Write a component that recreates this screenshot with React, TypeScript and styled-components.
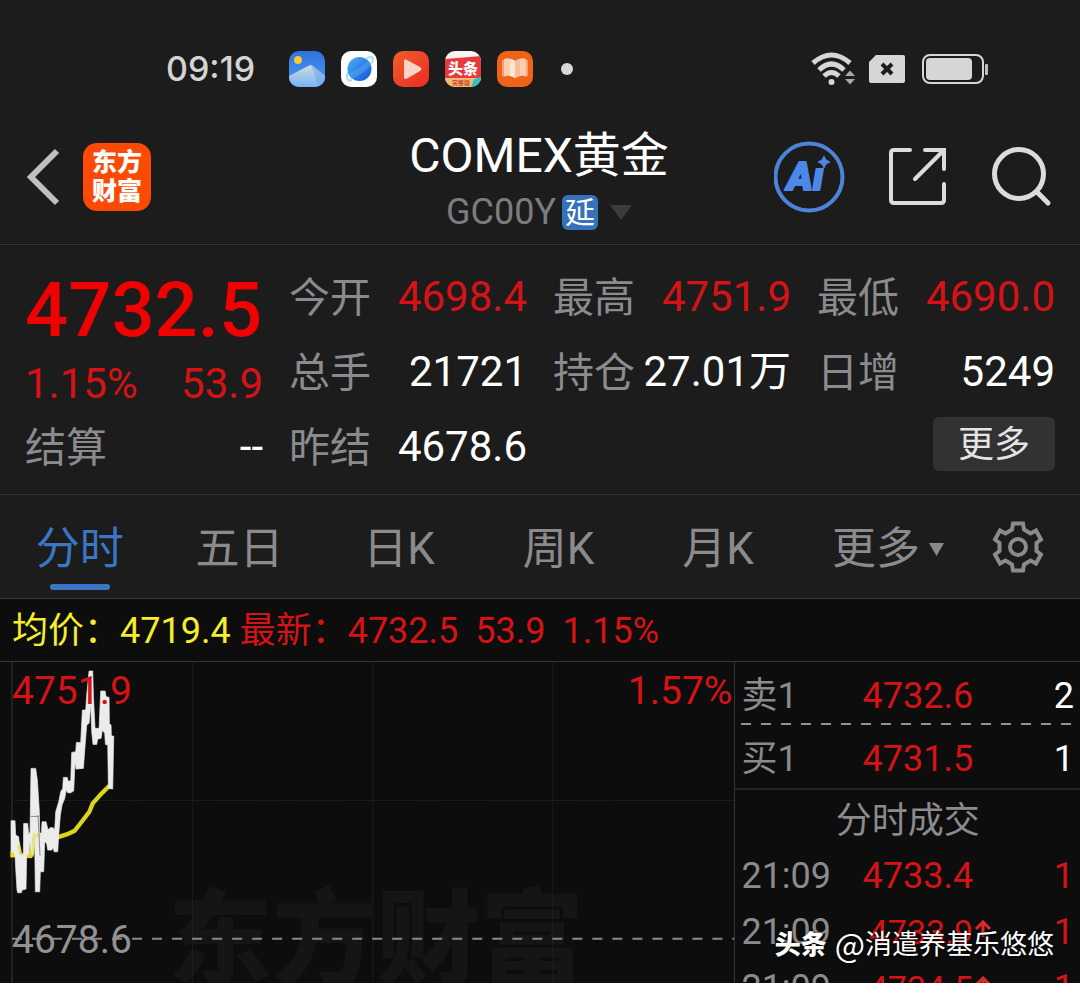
import React from "react";
import styled, { createGlobalStyle } from "styled-components";

const sans = `Roboto, "Noto Sans CJK SC", sans-serif`;

const color = {
  panel: "#1c1c1c",
  chart: "#0d0d0d",
  line: "#343434",
  muted: "#8b8b8e",
  dim: "#7c7c80",
  red: "#d51317",
  strongRed: "#ee0202",
  yellow: "#f6ee2c",
  blue: "#3a76c4",
  white: "#ffffff",
};

const GlobalStyle = createGlobalStyle`
  * { box-sizing: border-box; }
  body { margin: 0; background: ${color.chart}; font-family: ${sans}; }
  button { font-family: inherit; border: 0; padding: 0; background: none; cursor: pointer; }
  svg { display: block; flex: none; }
`;

const Page = styled.div`
  position: relative;
  display: flex;
  flex-direction: column;
  height: 100vh;
  overflow: hidden;
  background: ${color.panel};
  color: ${color.white};
`;

/* ---------- status bar ---------- */

const StatusBar = styled.div`
  display: flex;
  align-items: center;
  padding: 51px 91px 24px 166px;
`;

const Clock = styled.time`
  width: 123px;
  font-family: Inter, sans-serif;
  font-size: 34px;
  font-weight: 500;
  line-height: 36px;
  color: #d4d4d4;
`;

const Notifications = styled.div`
  display: flex;
  align-items: center;
  gap: 16px;
`;

const MoreDot = styled.span`
  width: 12px;
  height: 12px;
  margin-left: 12px;
  border-radius: 50%;
  background: #d8d8d8;
`;

const Signals = styled.div`
  display: flex;
  align-items: center;
  gap: 14px;
  margin-left: auto;
`;

/* ---------- header ---------- */

const Header = styled.header`
  display: grid;
  grid-template-columns: 1fr auto 1fr;
  align-items: center;
  padding: 10px 28px 11px 26px;
  border-bottom: 1px solid ${color.line};
`;

const HeaderStart = styled.div`
  display: flex;
  align-items: center;
  gap: 21px;
`;

const HeaderEnd = styled.div`
  display: flex;
  align-items: center;
  justify-content: flex-end;
  gap: 43px;
`;

const Brand = styled.a`
  display: grid;
  place-content: center;
  width: 68px;
  height: 68px;
  border-radius: 14px;
  background: #fb4a05;
  color: ${color.white};
  font-size: 25px;
  font-weight: 900;
  line-height: 29px;
  text-align: center;
  text-decoration: none;
`;

const Title = styled.h1`
  margin: 0;
  font-size: 48px;
  font-weight: 400;
  line-height: 70px;
  text-align: center;
`;

const Symbol = styled.button`
  display: flex;
  align-items: center;
  justify-content: center;
  width: 100%;
  color: ${color.dim};
  font-size: 36px;
  line-height: 42px;
`;

const DelayBadge = styled.span`
  width: 36px;
  height: 35px;
  margin: 0 12px 0 6px;
  border-radius: 6px;
  background: #3672b8;
  color: ${color.white};
  font-size: 30px;
  line-height: 35px;
  text-align: center;
`;

/* ---------- quote ---------- */

const Quote = styled.section`
  display: grid;
  grid-template-columns: repeat(4, minmax(0, 1fr));
  grid-auto-rows: 75px;
  column-gap: 26px;
  padding: 14px 25px 10px;
  border-bottom: 1px solid ${color.line};
`;

const Headline = styled.div`
  grid-row: span 2;
`;

const LastPrice = styled.div`
  color: ${color.strongRed};
  font-size: 76px;
  font-weight: 500;
  line-height: 102px;
`;

const Change = styled.div`
  display: flex;
  justify-content: space-between;
  color: ${color.red};
  font-size: 42px;
  line-height: 46px;
`;

const Field = styled.div`
  display: flex;
  justify-content: space-between;
  line-height: 75px;
  white-space: nowrap;
`;

const FieldLabel = styled.span`
  color: ${color.muted};
  font-size: 41px;
  line-height: 79px;
`;

const FieldValue = styled.span<{ $up?: boolean }>`
  color: ${(p) => (p.$up ? color.red : color.white)};
  font-size: 42px;
`;

const MoreButton = styled.button`
  grid-column: 4;
  justify-self: end;
  width: 122px;
  height: 54px;
  margin-top: 8px;
  padding-top: 3px;
  border-radius: 6px;
  background: #323232;
  color: #e4e4e4;
  font-size: 36px;
  line-height: 51px;
`;

/* ---------- tabs ---------- */

const Tabs = styled.nav`
  display: flex;
  padding-right: 22px;
  border-bottom: 1px solid ${color.line};
`;

const Tab = styled.button<{ $active?: boolean; $wide?: boolean }>`
  position: relative;
  display: flex;
  flex: ${(p) => (p.$wide ? "0 0 180px" : "1 1 0")};
  align-items: center;
  justify-content: center;
  gap: 9px;
  padding-top: 5px;
  color: ${(p) => (p.$active ? color.blue : color.muted)};
  font-size: 44px;
  line-height: 98px;

  &::after {
    content: "";
    display: ${(p) => (p.$active ? "block" : "none")};
    position: absolute;
    bottom: 8px;
    left: calc(50% - 30px);
    width: 60px;
    height: 6px;
    border-radius: 3px;
    background: ${color.blue};
  }
`;

const SettingsButton = styled.button`
  display: grid;
  flex: 0 0 80px;
  place-items: center;
`;

/* ---------- chart ---------- */

const Summary = styled.div`
  display: flex;
  padding: 3px 12px 0;
  border-bottom: 1px solid ${color.line};
  background: ${color.chart};
  font-size: 36px;
  line-height: 59px;
  white-space: nowrap;
`;

const SummaryItem = styled.span<{ $tone: "yellow" | "red"; $gap: number }>`
  margin-right: ${(p) => p.$gap}px;
  color: ${(p) => color[p.$tone]};
`;

const Market = styled.main`
  display: flex;
  flex: 1;
  min-height: 0;
  overflow: hidden;
  background: ${color.chart};
`;

const ChartPane = styled.section`
  flex: 1;
  min-width: 0;

  svg {
    width: 100%;
    height: auto;
  }
`;

const Side = styled.aside`
  flex: 0 0 32%;
  border-left: 1px solid ${color.line};
`;

const Table = styled.table`
  width: 100%;
  border-collapse: collapse;
  table-layout: fixed;
  font-size: 36px;
  line-height: 40px;
`;

const BookRow = styled.tr<{ $dashed?: boolean }>`
  height: 63px;
  background: ${(p) =>
    p.$dashed
      ? "repeating-linear-gradient(90deg, #929292 0 10px, transparent 10px 20px) 6px 100% / 330px 2px no-repeat"
      : "none"};

  && > * {
    padding-top: 4px;
  }
`;

const TradeRow = styled.tr`
  height: 56px;
`;

const LabelCell = styled.th`
  width: 36%;
  padding: 0 0 0 6px;
  color: ${color.muted};
  font-weight: 400;
  text-align: left;
`;

const PriceCell = styled.td<{ $small?: boolean }>`
  position: relative;
  padding: 0;
  color: ${color.red};
  font-size: ${(p) => (p.$small ? 34 : 36)}px;
  text-align: right;

  svg {
    position: absolute;
    top: 16px;
    left: 100%;
  }
`;

const VolumeCell = styled.td<{ $up?: boolean }>`
  width: 31%;
  padding: 0 6px 0 0;
  color: ${(p) => (p.$up ? color.red : color.white)};
  text-align: right;
`;

const TradesTitle = styled.h2`
  margin: 0;
  padding-top: 4px;
  border-top: 2px solid #242424;
  color: ${color.muted};
  font-size: 36px;
  font-weight: 400;
  line-height: 54px;
  text-align: center;
`;

const Credit = styled.div`
  position: absolute;
  right: 26px;
  bottom: 20px;
  display: flex;
  align-items: center;
  color: ${color.white};
  font-family: "Noto Sans CJK SC", sans-serif;
  font-size: 27px;
  line-height: 40px;
  text-shadow: 0 1px 3px #000;

  strong {
    margin-right: 8px;
    font-size: 26px;
    font-weight: 900;
  }
`;

const AtSign = styled.span`
  font-size: 32px;
`;

/* ---------- icons ---------- */

const GalleryIcon = () => (
  <svg width="36" height="36" viewBox="0 0 36 36">
    <defs>
      <linearGradient id="sky" x1="0" y1="0" x2="0" y2="1">
        <stop offset="0" stopColor="#2f72e0" />
        <stop offset="1" stopColor="#4f9bf2" />
      </linearGradient>
      <linearGradient id="hill" x1="0" y1="0" x2="0" y2="1">
        <stop offset="0" stopColor="#cfdde0" />
        <stop offset="1" stopColor="#78b2f5" />
      </linearGradient>
      <clipPath id="tile">
        <rect width="36" height="36" rx="10" />
      </clipPath>
    </defs>
    <g clipPath="url(#tile)">
      <rect width="36" height="36" fill="url(#sky)" />
      <circle cx="9" cy="9" r="4" fill="#f2cb3a" />
      <path d="M0 25 L20 14.500 Q22 13.500 24 15 L36 25 V36 H0Z" fill="url(#hill)" />
      <path d="M22 14 Q23 14 24 15 L36 25 V36 H30Z" fill="#6fa9f2" opacity=".6" />
    </g>
  </svg>
);

const BrowserIcon = () => (
  <svg width="36" height="36" viewBox="0 0 36 36">
    <defs>
      <linearGradient id="globe" x1="0" y1="0" x2="1" y2="1">
        <stop offset="0" stopColor="#49b4f5" />
        <stop offset="1" stopColor="#1552d6" />
      </linearGradient>
    </defs>
    <rect width="36" height="36" rx="10" fill="#fdfdfd" />
    <path d="M8 20 C4 26 6 31 11 29 M25 8 C31 4 34 7 30 13" fill="none" stroke="#a9dbfb" strokeWidth="2" />
    <circle cx="18.500" cy="18" r="12" fill="url(#globe)" />
    <path d="M7 22 C15 20 23 14 27 10 L30 14 C24 21 17 26 10 28Z" fill="#5cb0f6" opacity=".4" />
  </svg>
);

const VideoIcon = () => (
  <svg width="36" height="36" viewBox="0 0 36 36">
    <defs>
      <linearGradient id="video" x1="0" y1="0" x2="1" y2="1">
        <stop offset="0" stopColor="#ee5f2a" />
        <stop offset="1" stopColor="#ee2a25" />
      </linearGradient>
    </defs>
    <rect width="36" height="36" rx="10" fill="url(#video)" />
    <path d="M11 10 Q11 7 14 9 L27 16 Q30 18 27 20 L14 27.500 Q11 29 11 26Z" fill="#fbd3c8" />
  </svg>
);

const NewsIcon = () => (
  <svg width="36" height="36" viewBox="0 0 36 36">
    <g clipPath="url(#tile)">
      <rect width="36" height="36" fill="#f8f4f1" />
      <path d="M0 8 L36 5 V27 H0Z" fill="#e63a40" />
      <path d="M0 27 H30 L26 36 H0Z" fill="#f6b877" />
      <path d="M29 28 L36 26 V36 H26Z" fill="#2fc3c0" />
      <text x="18" y="23" fill="#fff" fontFamily={sans} fontSize="15" fontWeight="900" textAnchor="middle">
        头条
      </text>
      <text x="16" y="34" fill="#c8492a" fontFamily={sans} fontSize="6" fontWeight="700" textAnchor="middle">
        完整版
      </text>
    </g>
  </svg>
);

const BookIcon = () => (
  <svg width="36" height="36" viewBox="0 0 36 36">
    <rect width="36" height="36" rx="10" fill="#ee6318" />
    <path d="M5 10 Q5 9 6 9 L9 8 V26 L5 25Z M31 10 Q31 9 30 9 L27 8 V26 L31 25Z" fill="#f7a273" />
    <path d="M7 8 Q13 6 18 10 Q23 6 29 8 V25 Q23 24 18 27 Q13 24 7 25Z" fill="#fbcdb2" />
    <path d="M13 8 Q16 8 18 10 V27 Q16 25 13 25Z" fill="#fde6d8" />
    <path d="M18 10 Q20 8 23 8 V25 Q20 25 18 27Z" fill="#f9bb98" />
  </svg>
);

const WifiIcon = () => (
  <svg width="44" height="36" viewBox="0 0 44 36">
    <g fill="none" stroke="#d6d6d6" strokeWidth="5">
      <path d="M2 12 Q20.500 -4 39 12" />
      <path d="M8 19 Q20.500 7 33 19" />
      <path d="M13 25 Q20.500 18 28 25" />
    </g>
    <circle cx="20.500" cy="31" r="3" fill="#d6d6d6" />
    <path d="M39 19.500 L44 25 H34Z M34 28 H44 L39 33.500Z" fill="#a8a8a8" />
  </svg>
);

const SimIcon = () => (
  <svg width="36" height="30" viewBox="0 0 36 30">
    <path d="M7 1 H34 Q36 1 36 3 V27 Q36 29 34 29 H2 Q0 29 0 27 V8Z" fill="#d6d6d6" />
    <path d="M13 10 L23 20 M23 10 L13 20" stroke="#1c1c1c" strokeWidth="4" />
  </svg>
);

const BatteryIcon = () => (
  <svg width="70" height="32" viewBox="0 0 70 32">
    <rect x="4" y="2" width="60" height="28" rx="7" fill="none" stroke="#d6d6d6" strokeWidth="2" />
    <rect x="7" y="5" width="46" height="22" rx="4" fill="#d6d6d6" />
    <rect x="66" y="11" width="3" height="11" rx="1" fill="#bdbdbd" />
  </svg>
);

const BackIcon = () => (
  <svg width="36" height="60" viewBox="0 0 36 60">
    <path d="M31 4 L5 30 L31 56" fill="none" stroke="#bfbfc1" strokeWidth="6" />
  </svg>
);

const AiIcon = () => (
  <svg width="72" height="72" viewBox="0 0 72 72">
    <circle cx="35" cy="36" r="33.500" fill="none" stroke="#4e83da" strokeWidth="4" />
    <text
      x="13"
      y="49"
      fill="#4c88ea"
      stroke="#4c88ea"
      strokeWidth="2"
      strokeLinejoin="round"
      fontFamily="Roboto, sans-serif"
      fontSize="39"
      fontStyle="italic"
      fontWeight="900"
    >
      Aı
    </text>
    <path d="M50 15 Q51 20 56 21 Q51 22 50 27 Q49 22 44 21 Q49 20 50 15Z" fill="#4c88ea" stroke="#4c88ea" />
  </svg>
);

const ShareIcon = () => (
  <svg width="60" height="60" viewBox="0 0 60 60" fill="none" stroke="#dcdcdc" strokeWidth="4" strokeLinecap="round">
    <path d="M20 3 H4 Q1 3 1 6 V53 Q1 56 4 56 H51 Q54 56 54 53 V37" transform="translate(1 0)" />
    <path d="M36 3 H55 V22" />
    <path d="M26 32 L54 4" />
  </svg>
);

const SearchIcon = () => (
  <svg width="60" height="60" viewBox="0 0 60 60" fill="none" stroke="#dcdcdc" strokeWidth="5" strokeLinecap="round">
    <circle cx="27" cy="27" r="24.500" />
    <path d="M45 45 L56 56" />
  </svg>
);

const GearIcon = () => (
  <svg width="52" height="52" viewBox="-26 -26 52 52" fill="none" stroke={color.muted}>
    <path
      strokeWidth="4"
      d="M-5 -23.500 H5 L6 -17.500 L12.500 -13.500 L18 -16.500 L23 -7.500 L18.500 -4 V4 L23 7.500 L18 16.500 L12.500 13.500 L6 17.500 L5 23.500 H-5 L-6 17.500 L-12.500 13.500 L-18 16.500 L-23 7.500 L-18.500 4 V-4 L-23 -7.500 L-18 -16.500 L-12.500 -13.500 L-6 -17.500Z"
    />
    <circle r="8" strokeWidth="4" />
  </svg>
);

const Triangle = ({ width, height, fill }: { width: number; height: number; fill: string }) => (
  <svg width={width} height={height} viewBox="0 0 22 15" preserveAspectRatio="none">
    <path d="M0 0 H22 L11 15Z" fill={fill} />
  </svg>
);

const UpArrow = () => (
  <svg width="20" height="18" viewBox="0 0 20 18" fill="none" stroke="#e0282b" strokeWidth="3">
    <path d="M10 17 V3 M3 9 L10 2 L17 9" />
  </svg>
);

/* ---------- data ---------- */

const fields = [
  { label: "今开", value: "4698.4", up: true },
  { label: "最高", value: "4751.9", up: true },
  { label: "最低", value: "4690.0", up: true },
  { label: "总手", value: "21721" },
  { label: "持仓", value: "27.01万" },
  { label: "日增", value: "5249" },
  { label: "结算", value: "--" },
  { label: "昨结", value: "4678.6" },
];

const tabs = ["分时", "五日", "日K", "周K", "月K"];

const book = [
  { side: "卖1", price: "4732.6", volume: 2 },
  { side: "买1", price: "4731.5", volume: 1 },
];

const trades = [
  { time: "21:09", price: "4733.4", volume: 1 },
  { time: "21:09", price: "4733.9", volume: 1, rising: true },
  { time: "21:09", price: "4734.5", volume: 1, rising: true },
];

const averageLine =
  "M52 560 L60 600 L92 603 L102 540 L130 540 L172 547 L200 538 L224 527 L245 500 L268 470 L278 445 L300 420 L328 392";

const priceBand =
  "M33 497 L45 497 L47 540 L56 545 L60 600 L70 600 L71 505 L83 505 L86 540 L90 530 L93 340 L107 340 L112 375 L118 470 L119 530 L124 540 L126 500 L138 500 L144 525 L150 518 L160 518 L164 525 L167 470 L176 440 L182 410 L188 400 L190 367 L202 367 L204 378 L212 378 L215 292 L227 290 L229 262 L242 262 L247 165 L257 165 L260 120 L267 48 L278 48 L280 120 L285 220 L297 220 L302 108 L315 108 L318 125 L327 127 L328 206 L333 210 L334 243 L341 243 L338 402 L325 400 L323 270 L316 268 L314 235 L307 225 L303 250 L293 252 L290 268 L279 268 L275 230 L272 150 L267 205 L260 210 L256 260 L250 340 L228 342 L225 320 L221 408 L210 414 L202 412 L199 403 L194 430 L186 450 L181 480 L176 540 L173 590 L162 590 L160 578 L155 585 L143 585 L140 565 L134 560 L131 650 L121 650 L119 710 L106 710 L104 560 L100 600 L95 600 L90 560 L86 600 L80 600 L78 702 L66 705 L64 713 L53 713 L51 705 L47 640 L45 600 L40 590 L33 590Z";

const IntradayChart = () => (
  <svg viewBox="0 0 734 321" role="img" aria-label="分时走势" fontFamily={sans}>
    <text x="168" y="315" fill="#151515" fontSize="104" fontWeight="900">
      东方财富
    </text>
    <g stroke="#2a2a2a">
      <path d="M12 0 V321" strokeWidth="2" stroke="#222222" />
      <path d="M192.500 0 V321 M372.500 0 V321 M552.500 0 V321" strokeDasharray="1 1" />
      <path d="M12 138.500 H734" strokeDasharray="1 1" />
    </g>
    <path d="M12 276.500 H734" stroke="#8a8a8a" strokeWidth="2" strokeDasharray="10 10" />
    <g transform="translate(0 -7) scale(.33333)">
      <rect x="31" y="588" width="14" height="19" fill="#e6e01e" />
      <path d={averageLine} fill="none" stroke="#dcd31c" strokeWidth="13" strokeLinejoin="round" />
      <path d={priceBand} fill="#ececec" stroke="#ececec" strokeWidth="2" />
      <path d="M56 570 L62 598 M84 604 L98 600 L102 540 L122 542" fill="none" stroke="#e4dc2a" strokeWidth="10" opacity=".5" />
      <path d="M114 480 L120 602 M92 484 H116" stroke="#5a5a5a" strokeWidth="2" />
    </g>
    <g fontSize="39">
      <text x="12" y="42" fill={color.red}>
        4751.9
      </text>
      <text x="732" y="42" fill={color.red} textAnchor="end">
        1.57%
      </text>
      <text x="12" y="291" fill="#929292">
        4678.6
      </text>
    </g>
  </svg>
);

export default function App() {
  return (
    <Page>
      <GlobalStyle />
      <StatusBar>
        <Clock>09:19</Clock>
        <Notifications>
          <GalleryIcon />
          <BrowserIcon />
          <VideoIcon />
          <NewsIcon />
          <BookIcon />
          <MoreDot />
        </Notifications>
        <Signals>
          <WifiIcon />
          <SimIcon />
          <BatteryIcon />
        </Signals>
      </StatusBar>

      <Header>
        <HeaderStart>
          <button type="button" aria-label="返回">
            <BackIcon />
          </button>
          <Brand href="#home">
            东方
            <br />
            财富
          </Brand>
        </HeaderStart>
        <div>
          <Title>COMEX黄金</Title>
          <Symbol type="button">
            GC00Y
            <DelayBadge>延</DelayBadge>
            <Triangle width={22} height={15} fill="#3b3b3b" />
          </Symbol>
        </div>
        <HeaderEnd>
          <button type="button" aria-label="智能助手">
            <AiIcon />
          </button>
          <button type="button" aria-label="分享">
            <ShareIcon />
          </button>
          <button type="button" aria-label="搜索">
            <SearchIcon />
          </button>
        </HeaderEnd>
      </Header>

      <Quote>
        <Headline>
          <LastPrice>4732.5</LastPrice>
          <Change>
            <span>1.15%</span>
            <span>53.9</span>
          </Change>
        </Headline>
        {fields.map((f) => (
          <Field key={f.label}>
            <FieldLabel>{f.label}</FieldLabel>
            <FieldValue $up={f.up}>{f.value}</FieldValue>
          </Field>
        ))}
        <MoreButton type="button">更多</MoreButton>
      </Quote>

      <Tabs>
        {tabs.map((name, i) => (
          <Tab key={name} type="button" $active={i === 0}>
            {name}
          </Tab>
        ))}
        <Tab type="button" $wide>
          更多
          <Triangle width={15} height={13} fill={color.muted} />
        </Tab>
        <SettingsButton type="button" aria-label="设置">
          <GearIcon />
        </SettingsButton>
      </Tabs>

      <Summary>
        <SummaryItem $tone="yellow" $gap={9}>
          均价：4719.4
        </SummaryItem>
        <SummaryItem $tone="red" $gap={17}>
          最新：4732.5
        </SummaryItem>
        <SummaryItem $tone="red" $gap={17}>
          53.9
        </SummaryItem>
        <SummaryItem $tone="red" $gap={0}>
          1.15%
        </SummaryItem>
      </Summary>

      <Market>
        <ChartPane>
          <IntradayChart />
        </ChartPane>
        <Side>
          <Table>
            <tbody>
              {book.map((row, i) => (
                <BookRow key={row.side} $dashed={i === 0}>
                  <LabelCell scope="row">{row.side}</LabelCell>
                  <PriceCell>{row.price}</PriceCell>
                  <VolumeCell>{row.volume}</VolumeCell>
                </BookRow>
              ))}
            </tbody>
          </Table>
          <TradesTitle>分时成交</TradesTitle>
          <Table>
            <tbody>
              {trades.map((row) => (
                <TradeRow key={row.price}>
                  <LabelCell scope="row">{row.time}</LabelCell>
                  <PriceCell $small={row.rising}>
                    {row.price}
                    {row.rising && <UpArrow />}
                  </PriceCell>
                  <VolumeCell $up>{row.volume}</VolumeCell>
                </TradeRow>
              ))}
            </tbody>
          </Table>
        </Side>
      </Market>

      <Credit>
        <strong>头条</strong>
        <AtSign>@</AtSign>
        <span>消遣养基乐悠悠</span>
      </Credit>
    </Page>
  );
}
